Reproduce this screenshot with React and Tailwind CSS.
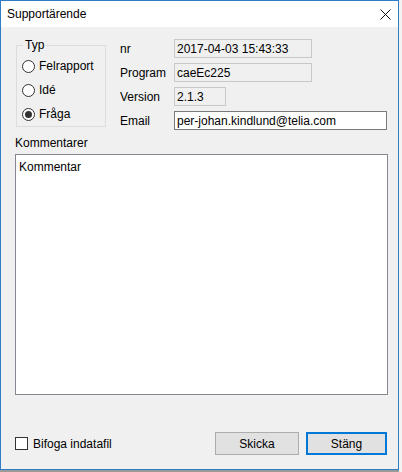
import React from "react";

const font = { fontFamily: '"Liberation Sans", Arial, sans-serif' };

function Radio({ checked, label }) {
  return (
    <div className="flex items-center h-[24px]">
      <span className="ml-[5px] w-[13px] h-[13px] rounded-full border border-[#333333] bg-white flex items-center justify-center">
        {checked && <span className="w-[7px] h-[7px] rounded-full bg-[#333333]" />}
      </span>
      <span className="ml-[4px] text-[12px] text-black">{label}</span>
    </div>
  );
}

function Field({ label, value, width, white }) {
  return (
    <div className="flex items-center h-[19px]">
      <span className="w-[54px] text-[12px] text-black">{label}</span>
      <div
        className={
          "h-[19px] border flex items-center pl-[2px] text-[12px] text-black " +
          (white ? "bg-white border-[#7a7a7a]" : "bg-[#f0f0f0] border-[#c8c8c8]")
        }
        style={{ width }}
      >
        {value}
      </div>
    </div>
  );
}

export default function App() {
  return (
    <div className="w-[402px] h-[472px] bg-[#f3f3f3] flex flex-col" style={font}>
      <div className="w-[399px] h-[470px] border border-[#2e7cc4] flex flex-col bg-[#f0f0f0]">
        <div className="h-[26px] bg-white flex items-center justify-between pl-[6px] pr-[7px] shrink-0">
          <span className="text-[12px] text-black">Supportärende</span>
          <svg width="11" height="11" viewBox="0 0 11 11">
            <path d="M0.5 0.5 L10.5 10.5 M10.5 0.5 L0.5 10.5" stroke="#111" strokeWidth="1" fill="none" />
          </svg>
        </div>
        <div className="flex-1 flex flex-col pl-[14px] pr-[11px]">
          <div className="flex pt-[11px]">
            <fieldset className="ml-[1px] w-[95px] h-[89px] border border-[#dcdcdc] px-[0px] pt-[2px] m-0">
              <legend className="ml-[6px] px-[2px] text-[12px] leading-[14px] text-black">Typ</legend>
              <div className="flex flex-col">
                <Radio label="Felrapport" />
                <Radio label="Idé" />
                <Radio label="Fråga" checked />
              </div>
            </fieldset>
            <div className="ml-[14px] mt-[1px] flex flex-col gap-[5px]">
              <Field label="nr" value="2017-04-03 15:43:33" width={138} />
              <Field label="Program" value="caeEc225" width={138} />
              <Field label="Version" value="2.1.3" width={52} />
              <Field label="Email" value="per-johan.kindlund@telia.com" width={213} white />
            </div>
          </div>
          <div className="mt-[6px] text-[12px] text-black leading-[14px]">Kommentarer</div>
          <div className="mt-[4px] w-[373px] h-[241px] bg-white border border-[#828790] px-[3px] pt-[3px] text-[12px] text-black">
            Kommentar
          </div>
          <div className="mt-[37px] flex items-center">
            <span className="w-[13px] h-[13px] border border-[#333333] bg-white" />
            <span className="ml-[5px] text-[12px] text-black">Bifoga indatafil</span>
            <div className="ml-auto flex gap-[7px]">
              <button className="w-[84px] h-[23px] bg-[#e1e1e1] border border-[#adadad] text-[12px] text-black">Skicka</button>
              <button className="w-[81px] h-[23px] bg-[#e1e1e1] border-2 border-[#0078d7] text-[12px] text-black">Stäng</button>
            </div>
          </div>
        </div>
      </div>
      <div className="h-[2px] w-[399px] bg-[#9a9a9a]" />
    </div>
  );
}
